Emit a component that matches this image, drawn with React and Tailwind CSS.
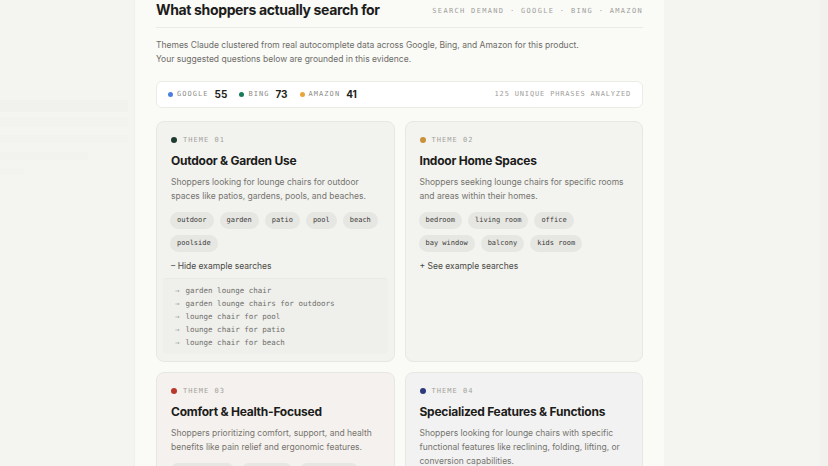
import React from "react";

const sans = { fontFamily: 'Inter, "Noto Sans", sans-serif' };
const mono = { fontFamily: '"DejaVu Sans Mono", "Liberation Mono", monospace' };

function Chip({ children }) {
  return (
    <span
      className="inline-flex h-[17px] items-center rounded-full bg-[#e6e6e2] px-[7px] text-[7px] text-[#3a3a36]"
      style={mono}
    >
      {children}
    </span>
  );
}

function Card({ dot, num, title, desc, chips, toggle, examples, tint }) {
  return (
    <div className={`flex flex-col rounded-[8px] border border-[#e8e8e3] px-[13px] pt-[13px] pb-[7px] ${tint}`}>
      <div className="flex h-[10px] shrink-0 items-center gap-[6px] pl-[1px]">
        <span className="h-[6px] w-[6px] rounded-full" style={{ background: dot }} />
        <span className="text-[7px] tracking-[0.15em] text-[#a3a39c]" style={mono}>
          THEME {num}
        </span>
      </div>
      <div className="mt-[8px] pl-[1px] text-[12px] font-bold leading-[16px] tracking-[-0.02em] text-[#1c1c1a]">
        {title}
      </div>
      <p className="mt-[6px] pl-[1px] text-[8.5px] leading-[14px] text-[#75756f]">{desc}</p>
      {chips && (
        <div className="mt-[9px] flex flex-wrap gap-x-[6px] gap-y-[6px]">
          {chips.map((c) => (
            <Chip key={c}>{c}</Chip>
          ))}
        </div>
      )}
      {toggle && (
        <div className="mt-[8px] pl-[1px] text-[8.5px] leading-[12px] text-[#4a4a45]">{toggle}</div>
      )}
      {examples && (
        <div className="mt-[6px] -mx-[7px] rounded-[4px] border-t border-[#e9e9e4] bg-[#efefec] px-[12px] py-[5px]">
          {examples.map((e) => (
            <div key={e} className="flex h-[13px] items-center gap-[6px] text-[7.5px] text-[#6e6e68]" style={mono}>
              <span className="text-[#a0a09a]">→</span>
              <span>{e}</span>
            </div>
          ))}
        </div>
      )}
    </div>
  );
}

export default function App() {
  return (
    <div className="flex h-[466px] w-[828px] overflow-hidden bg-[#f4f4f0]" style={sans}>
      {/* faint sidebar */}
      <div className="w-[134px] shrink-0 pt-[100px]">
        <div className="h-[12px] w-[128px] bg-[#f1f1ed]" />
        <div className="mt-[5px] h-[10px] w-[128px] bg-[#f2f2ee]" />
        <div className="mt-[8px] h-[8px] w-[128px] bg-[#f2f2ee]" />
        <div className="mt-[9px] h-[8px] w-[88px] bg-[#f2f2ee]" />
        <div className="mt-[8px] h-[7px] w-[24px] bg-[#f2f2ee]" />
      </div>

      {/* main panel */}
      <div className="h-[466px] w-[530px] shrink-0 overflow-hidden border-l border-[#efefea] bg-[#fafaf7] px-[21px]">
        <div className="flex items-center justify-between border-b border-[#ebebe6] pb-[7px]">
          <h1 className="text-[14px] font-bold leading-[20px] tracking-[-0.025em] text-[#1c1c1a]">
            What shoppers actually search for
          </h1>
          <span className="pt-[3px] text-[7px] tracking-[0.19em] text-[#a0a09a]" style={mono}>
            SEARCH DEMAND · GOOGLE · BING · AMAZON
          </span>
        </div>

        <p className="mt-[10px] text-[8.5px] leading-[14px] text-[#6d6d67]">
          Themes Claude clustered from real autocomplete data across Google, Bing, and Amazon for this product.
          <br />
          Your suggested questions below are grounded in this evidence.
        </p>

        <div className="mt-[15px] flex h-[27px] items-center justify-between rounded-[6px] border border-[#ecece7] bg-white px-[11px]">
          <div className="flex items-center gap-[12px]">
            <div className="flex items-center gap-[4px]">
              <span className="h-[5px] w-[5px] rounded-full bg-[#4d7fe0]" />
              <span className="text-[7px] tracking-[0.15em] text-[#8e8e88]" style={mono}>GOOGLE</span>
              <span className="ml-[2px] text-[10px] font-bold text-[#1f1f1c]">55</span>
            </div>
            <div className="flex items-center gap-[4px]">
              <span className="h-[5px] w-[5px] rounded-full bg-[#187a5c]" />
              <span className="text-[7px] tracking-[0.15em] text-[#8e8e88]" style={mono}>BING</span>
              <span className="ml-[2px] text-[10px] font-bold text-[#1f1f1c]">73</span>
            </div>
            <div className="flex items-center gap-[4px]">
              <span className="h-[5px] w-[5px] rounded-full bg-[#eaa43a]" />
              <span className="text-[7px] tracking-[0.15em] text-[#8e8e88]" style={mono}>AMAZON</span>
              <span className="ml-[2px] text-[10px] font-bold text-[#1f1f1c]">41</span>
            </div>
          </div>
          <span className="text-[7px] tracking-[0.12em] text-[#a0a09a]" style={mono}>
            125 UNIQUE PHRASES ANALYZED
          </span>
        </div>

        <div className="mt-[13px] grid grid-cols-2 gap-x-[10px] gap-y-[10px]">
          <Card
            dot="#1e3b2f"
            num="01"
            title="Outdoor & Garden Use"
            desc="Shoppers looking for lounge chairs for outdoor spaces like patios, gardens, pools, and beaches."
            chips={["outdoor", "garden", "patio", "pool", "beach", "poolside"]}
            toggle="– Hide example searches"
            examples={[
              "garden lounge chair",
              "garden lounge chairs for outdoors",
              "lounge chair for pool",
              "lounge chair for patio",
              "lounge chair for beach",
            ]}
            tint="bg-[#f2f2ef]"
          />
          <Card
            dot="#c9913b"
            num="02"
            title="Indoor Home Spaces"
            desc="Shoppers seeking lounge chairs for specific rooms and areas within their homes."
            chips={["bedroom", "living room", "office", "bay window", "balcony", "kids room"]}
            toggle="+ See example searches"
            tint="bg-[#f3f3f0]"
          />
          <Card
            dot="#b8392c"
            num="03"
            title="Comfort & Health-Focused"
            desc="Shoppers prioritizing comfort, support, and health benefits like pain relief and ergonomic features."
            chips={["back support", "ergonomic", "pain relief"]}
            tint="bg-[#f5f1ee]"
          />
          <Card
            dot="#2d3a7c"
            num="04"
            title="Specialized Features & Functions"
            desc="Shoppers looking for lounge chairs with specific functional features like reclining, folding, lifting, or conversion capabilities."
            chips={["reclining", "folding"]}
            tint="bg-[#f2f2f2]"
          />
        </div>
      </div>

      {/* right area */}
      <div className="flex flex-1">
        <div className="flex-1 bg-[#f4f4f0]" />
        <div className="w-[8px] bg-[#f1f1ee]" />
      </div>
    </div>
  );
}
